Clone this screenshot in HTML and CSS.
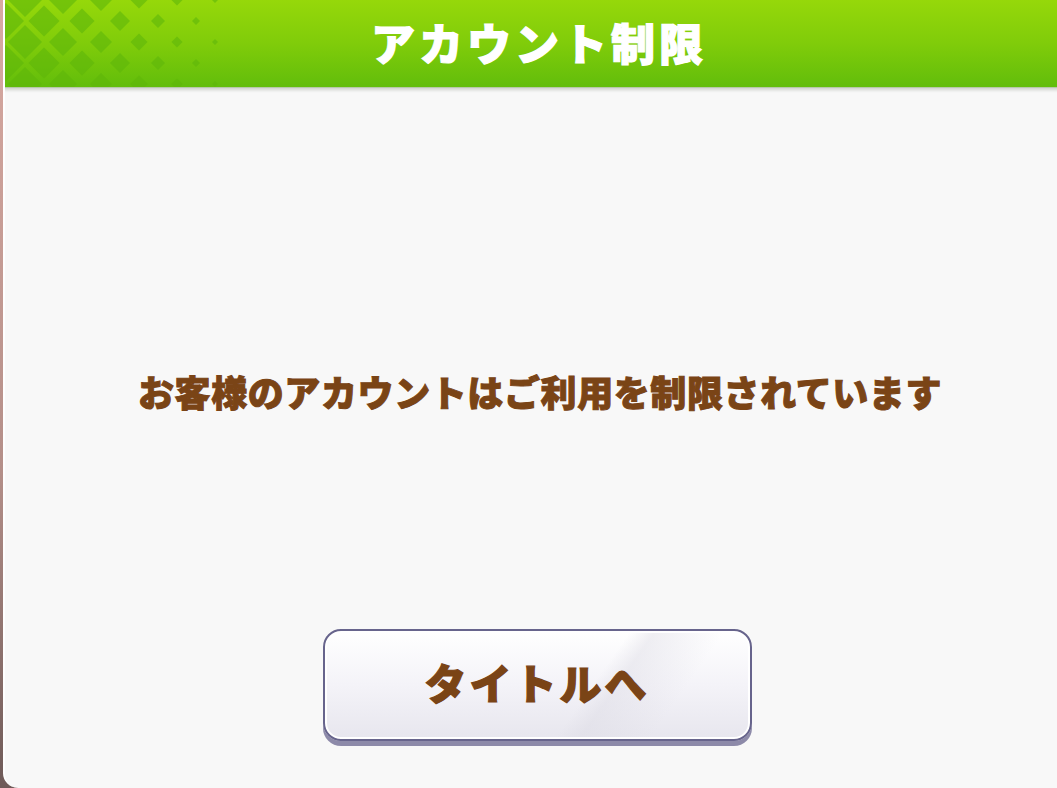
FILE: index.html
```html
<!DOCTYPE html>
<html lang="ja">
<head>
<meta charset="utf-8">
<title>アカウント制限</title>
<link rel="stylesheet" href="styles.css">
</head>
<body>
<div class="screen">
  <section class="dialog">
    <header class="dialog-head">
      <svg class="head-pattern" width="230" height="87" viewBox="0 0 230 87" aria-hidden="true">
        <defs>
          <path id="dia" d="M0-1L1 0 0 1-1 0z"/>
        </defs>
        <g fill="#5fb70a" opacity="0.6">
          <use href="#dia" transform="translate(22 0) scale(17)"/>
          <use href="#dia" transform="translate(60 0) scale(14)"/>
          <use href="#dia" transform="translate(98 0) scale(11)"/>
          <use href="#dia" transform="translate(136 0) scale(8.5)"/>
          <use href="#dia" transform="translate(174 0) scale(5.5)"/>
          <use href="#dia" transform="translate(212 0) scale(3)"/>

          <use href="#dia" transform="translate(3 21) scale(18)"/>
          <use href="#dia" transform="translate(41 21) scale(15.5)"/>
          <use href="#dia" transform="translate(79 21) scale(12.5)"/>
          <use href="#dia" transform="translate(117 21) scale(10)"/>
          <use href="#dia" transform="translate(155 21) scale(7)"/>
          <use href="#dia" transform="translate(193 21) scale(4)"/>

          <use href="#dia" transform="translate(22 42) scale(17)"/>
          <use href="#dia" transform="translate(60 42) scale(14)"/>
          <use href="#dia" transform="translate(98 42) scale(11)"/>
          <use href="#dia" transform="translate(136 42) scale(8.5)"/>
          <use href="#dia" transform="translate(174 42) scale(5.5)"/>
          <use href="#dia" transform="translate(212 42) scale(3)"/>

          <use href="#dia" transform="translate(3 63) scale(18)"/>
          <use href="#dia" transform="translate(41 63) scale(15.5)"/>
          <use href="#dia" transform="translate(79 63) scale(12.5)"/>
          <use href="#dia" transform="translate(117 63) scale(10)"/>
          <use href="#dia" transform="translate(155 63) scale(7)"/>
          <use href="#dia" transform="translate(193 63) scale(4)"/>

          <use href="#dia" transform="translate(22 84) scale(17)"/>
          <use href="#dia" transform="translate(60 84) scale(14)"/>
          <use href="#dia" transform="translate(98 84) scale(11)"/>
          <use href="#dia" transform="translate(136 84) scale(8.5)"/>
          <use href="#dia" transform="translate(174 84) scale(5.5)"/>
          <use href="#dia" transform="translate(212 84) scale(3)"/>
        </g>
      </svg>
      <h1 class="dialog-title">アカウント制限</h1>
    </header>
    <div class="dialog-body">
      <p class="dialog-message">お客様のアカウントはご利用を制限されています</p>
      <button class="title-button" type="button"><span class="title-button-label">タイトルへ</span></button>
    </div>
  </section>
</div>
</body>
</html>
```
FILE: styles.css
```css
html, body {
  margin: 0;
  padding: 0;
  height: 100%;
}

body {
  background: linear-gradient(to bottom, #d9aaa2 0%, #b48f89 60%, #6e5a58 100%);
  font-family: "Noto Sans CJK JP", "Noto Sans", sans-serif;
  overflow: hidden;
}

.screen {
  display: flex;
  height: 788px;
  padding-left: 3px;
  overflow: hidden;
}

.dialog {
  flex: 0 0 1070px;
  height: 788px;
  display: flex;
  flex-direction: column;
  background: #f8f8f8;
  border-left: 2px solid #ffffff;
  border-bottom-left-radius: 15px;
  overflow: hidden;
}

.dialog-head {
  position: relative;
  flex: 0 0 87px;
  display: flex;
  align-items: center;
  justify-content: center;
  margin-left: -2px;
  background: linear-gradient(to bottom, #96d80a 0%, #80cc0a 50%, #62bd0b 100%);
  box-shadow: 0 1px 0 #b7c8a8, 0 3px 3px rgba(90, 100, 80, 0.25);
  z-index: 1;
}

.head-pattern {
  position: absolute;
  left: 0;
  top: 0;
}

.dialog-title {
  position: relative;
  margin: 0 0 3px;
  color: #ffffff;
  font-size: 44px;
  font-weight: 900;
  letter-spacing: 4px;
  line-height: 1;
  -webkit-text-stroke: 1.2px #ffffff;
}

.dialog-body {
  flex: 1;
  display: flex;
  flex-direction: column;
  align-items: center;
}

.dialog-message {
  margin: 282px 0 0;
  color: #7a4416;
  font-size: 36px;
  font-weight: 900;
  line-height: 44px;
  letter-spacing: 0.6px;
  -webkit-text-stroke: 1px #7a4416;
}

.title-button {
  margin: 216px 6px 0 0;
  width: 429px;
  height: 112px;
  padding: 0;
  border: 2px solid #67648c;
  border-radius: 18px;
  background:
    linear-gradient(125deg, rgba(255,255,255,0) 0%, rgba(255,255,255,0) 61%, rgba(220,219,228,0.45) 66%, rgba(255,255,255,0) 80%),
    linear-gradient(to bottom, #ffffff 0%, #f4f3f8 50%, #e7e6ee 100%);
  box-shadow: inset 0 0 0 2px #ffffff, 0 5px 0 #8d8aa9;
  font-family: inherit;
  cursor: pointer;
}

.title-button-label {
  display: block;
  color: #7a4416;
  font-size: 42px;
  font-weight: 900;
  letter-spacing: 3px;
  line-height: 1;
  margin-top: -6px;
  -webkit-text-stroke: 1.2px #7a4416;
}
```
